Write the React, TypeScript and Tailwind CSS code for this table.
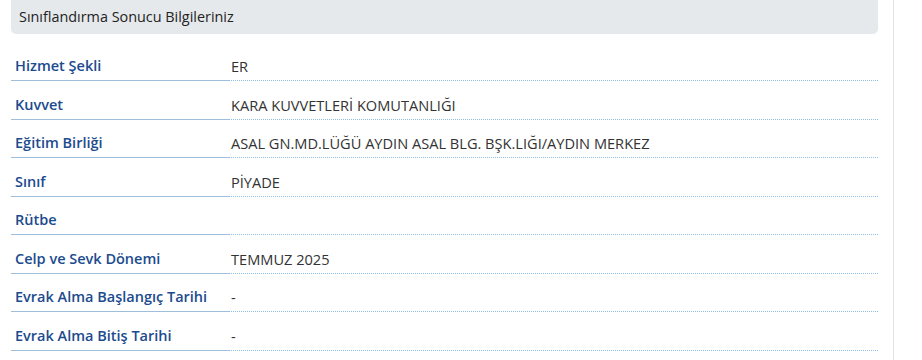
import React from "react";

const rows: [string, string][] = [
  ["Hizmet Şekli", "ER"],
  ["Kuvvet", "KARA KUVVETLERİ KOMUTANLIĞI"],
  ["Eğitim Birliği", "ASAL GN.MD.LÜĞÜ AYDIN ASAL BLG. BŞK.LIĞI/AYDIN MERKEZ"],
  ["Sınıf", "PİYADE"],
  ["Rütbe", ""],
  ["Celp ve Sevk Dönemi", "TEMMUZ 2025"],
  ["Evrak Alma Başlangıç Tarihi", "-"],
  ["Evrak Alma Bitiş Tarihi", "-"],
];

export default function App() {
  return (
    <div
      className="w-[922px] h-[360px] overflow-hidden bg-white flex"
      style={{ fontFamily: '"Open Sans", "Noto Sans", sans-serif' }}
    >
      <div className="w-[894px] shrink-0 pl-[11px] pr-[15px] border-r border-[#e3e3e3]">
        <div className="h-[34px] bg-[#e6e9ec] rounded-b-[5px] px-[8px] flex items-center text-[14.4px] text-[#222]">
          Sınıflandırma Sonucu Bilgileriniz
        </div>
        <div className="mt-[8.5px] flex flex-col">
          {rows.map(([label, value]) => (
            <div key={label} className="h-[38.5px] flex">
              <div className="w-[218px] shrink-0 flex items-end pb-[4px] pl-[4px] border-b border-[#9dbfdc] text-[14.5px] font-semibold text-[#1c4b8e] leading-[20px]">
                {label}
              </div>
              <div className="flex-1 flex items-end pb-[4px] pl-[2px] border-b border-dotted border-[#8fbde4] text-[14.6px] text-[#333] leading-[20px]">
                {value}
              </div>
            </div>
          ))}
        </div>
      </div>
      <div className="flex-1" />
    </div>
  );
}
